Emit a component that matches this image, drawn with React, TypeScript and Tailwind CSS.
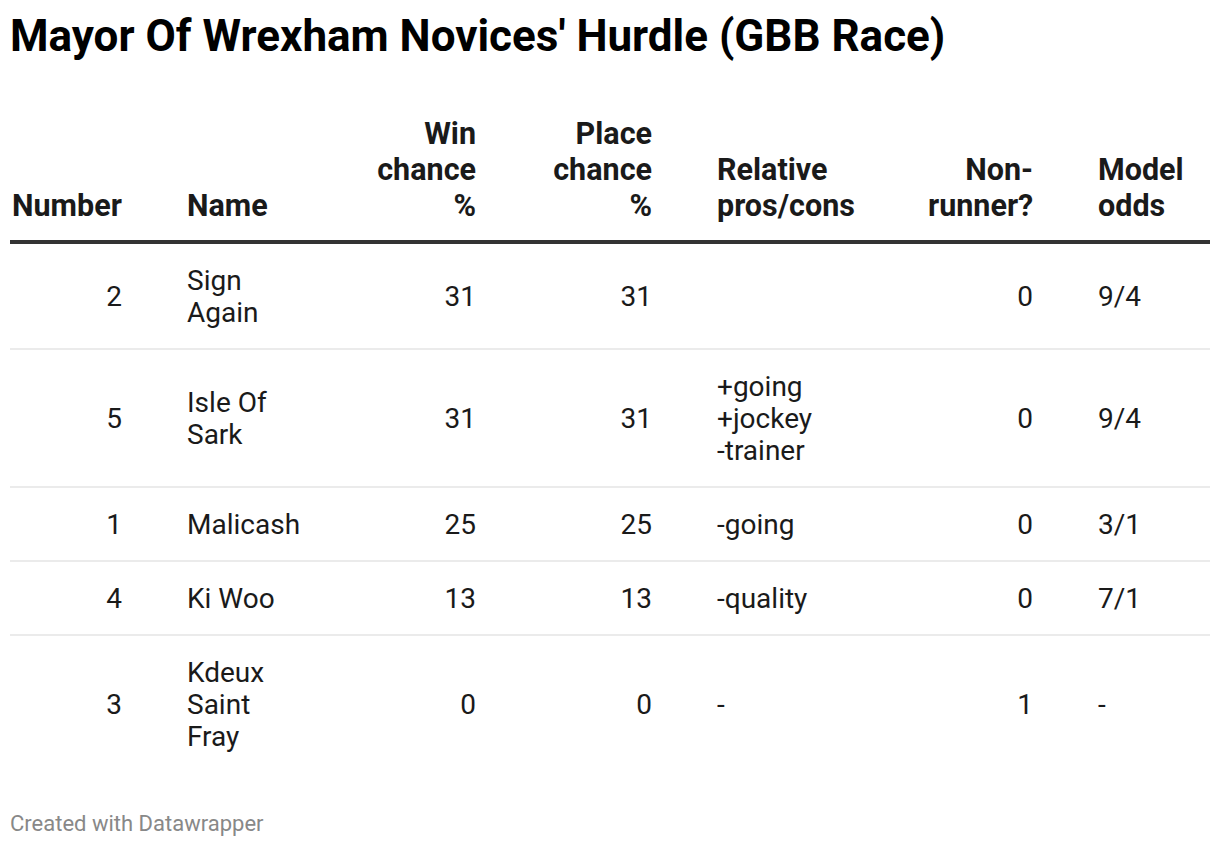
const rows = [
  { num: "2", name: "Sign Again", win: "31", place: "31", pros: [] as string[], nr: "0", odds: "9/4" },
  { num: "5", name: "Isle Of Sark", win: "31", place: "31", pros: ["+going", "+jockey", "-trainer"], nr: "0", odds: "9/4" },
  { num: "1", name: "Malicash", win: "25", place: "25", pros: ["-going"], nr: "0", odds: "3/1" },
  { num: "4", name: "Ki Woo", win: "13", place: "13", pros: ["-quality"], nr: "0", odds: "7/1" },
  { num: "3", name: "Kdeux Saint Fray", win: "0", place: "0", pros: ["-"], nr: "1", odds: "-" },
];

const grid = "grid grid-cols-[110px_120px_104px_111px_146px_105px_110px] gap-x-[65px] pl-[2px]";

export default function App() {
  return (
    <div className="min-h-[848px] bg-white px-[10px] pt-[10px] text-[#1a1a1a] [font-family:Roboto,'Liberation_Sans',sans-serif]">
      <h1 className="text-[44px] font-bold leading-[52px] text-black">
        Mayor Of Wrexham Novices' Hurdle (GBB Race)
      </h1>

      <div className="mt-[54px] w-[1200px]">
        <div className={`${grid} items-end border-b-4 border-[#333333] pb-[16px] text-[30.5px] font-bold leading-[36px]`}>
          <div>Number</div>
          <div>Name</div>
          <div className="text-right">Win chance %</div>
          <div className="text-right">Place chance %</div>
          <div>Relative pros/cons</div>
          <div className="text-right">Non-runner?</div>
          <div>Model odds</div>
        </div>

        {rows.map((r, i) => (
          <div
            key={r.num}
            className={`${grid} items-center pt-[21px] pb-[19px] text-[28px] leading-[32px] ${
              i < rows.length - 1 ? "border-b-2 border-[#ebebeb]" : ""
            }`}
          >
            <div className="text-right">{r.num}</div>
            <div>{r.name}</div>
            <div className="text-right">{r.win}</div>
            <div className="text-right">{r.place}</div>
            <div>
              {r.pros.map((p) => (
                <div key={p}>{p}</div>
              ))}
            </div>
            <div className="text-right">{r.nr}</div>
            <div>{r.odds}</div>
          </div>
        ))}
      </div>

      <p className="mt-[40px] text-[22px] leading-[24px] text-[#888888]">Created with Datawrapper</p>
    </div>
  );
}
